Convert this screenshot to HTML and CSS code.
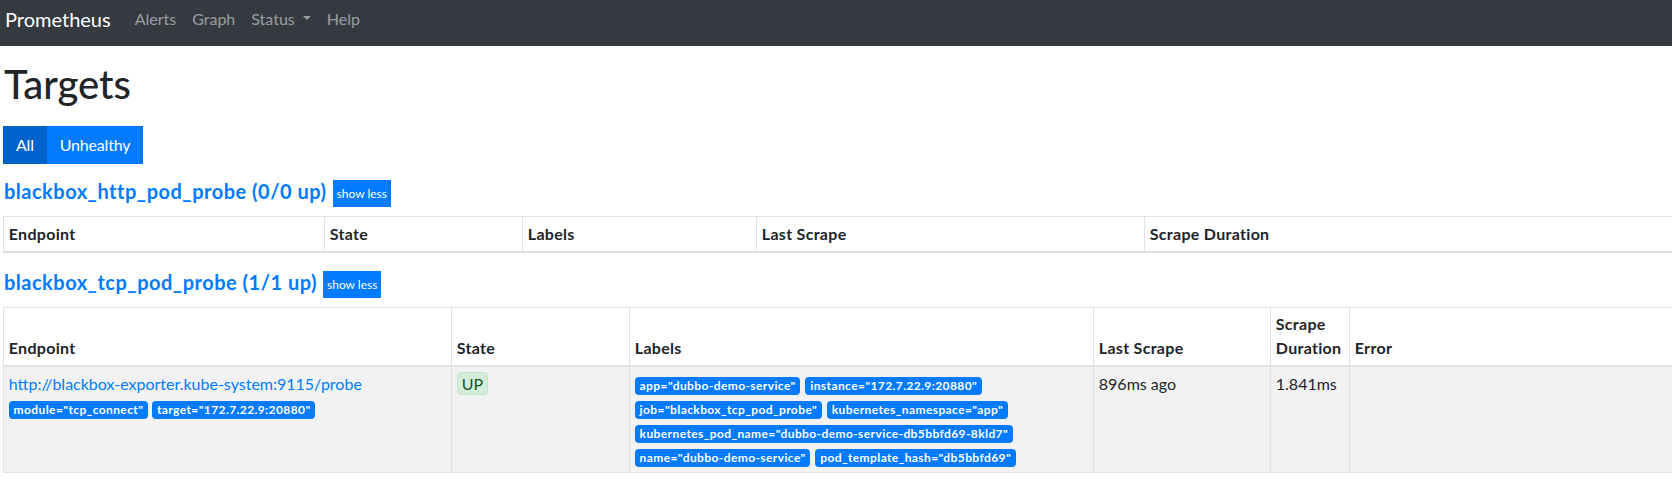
FILE: index.html
```html
<!DOCTYPE html>
<html lang="en">
<head>
<meta charset="utf-8">
<title>Prometheus Time Series Collection and Processing Server</title>
<link rel="stylesheet" href="styles.css">
</head>
<body>
<nav class="navbar">
  <a class="brand" href="#">Prometheus</a>
  <ul class="nav">
    <li><a class="nav-link" href="#">Alerts</a></li>
    <li><a class="nav-link" href="#">Graph</a></li>
    <li><a class="nav-link dropdown-toggle" href="#">Status</a></li>
    <li><a class="nav-link" href="#">Help</a></li>
  </ul>
</nav>
<main class="content">
  <h1 class="title">Targets</h1>
  <div class="btn-group">
    <button class="btn btn-primary active">All</button>
    <button class="btn btn-primary">Unhealthy</button>
  </div>

  <section class="job">
    <div class="job-head">
      <a class="job-name" href="#">blackbox_http_pod_probe (0/0 up)</a>
      <button class="btn-xs">show less</button>
    </div>
    <table class="targets targets-http">
      <colgroup>
        <col class="c-endpoint"><col class="c-state"><col class="c-labels"><col class="c-last"><col class="c-dur">
      </colgroup>
      <thead>
        <tr><th>Endpoint</th><th>State</th><th>Labels</th><th>Last Scrape</th><th>Scrape Duration</th></tr>
      </thead>
      <tbody></tbody>
    </table>
  </section>

  <section class="job">
    <div class="job-head">
      <a class="job-name" href="#">blackbox_tcp_pod_probe (1/1 up)</a>
      <button class="btn-xs">show less</button>
    </div>
    <table class="targets targets-tcp">
      <colgroup>
        <col class="c-endpoint"><col class="c-state"><col class="c-labels"><col class="c-last"><col class="c-dur"><col class="c-error">
      </colgroup>
      <thead>
        <tr><th>Endpoint</th><th>State</th><th>Labels</th><th>Last Scrape</th><th>Scrape Duration</th><th>Error</th></tr>
      </thead>
      <tbody>
        <tr>
          <td>
            <a class="endpoint-link" href="#">http://blackbox-exporter.kube-system:9115/probe</a>
            <div class="badges">
              <span class="badge">module="tcp_connect"</span>
              <span class="badge">target="172.7.22.9:20880"</span>
            </div>
          </td>
          <td><span class="state-indicator">UP</span></td>
          <td>
            <div class="badges labels">
              <span class="badge">app="dubbo-demo-service"</span>
              <span class="badge">instance="172.7.22.9:20880"</span>
              <span class="badge">job="blackbox_tcp_pod_probe"</span>
              <span class="badge">kubernetes_namespace="app"</span>
              <span class="badge">kubernetes_pod_name="dubbo-demo-service-db5bbfd69-8kld7"</span>
              <span class="badge">name="dubbo-demo-service"</span>
              <span class="badge">pod_template_hash="db5bbfd69"</span>
            </div>
          </td>
          <td>896ms ago</td>
          <td>1.841ms</td>
          <td></td>
        </tr>
      </tbody>
    </table>
  </section>
</main>
</body>
</html>
```
FILE: styles.css
```css
* { box-sizing: border-box; }

html, body {
  margin: 0;
  padding: 0;
  background: #fff;
}

body {
  font-family: Lato, "Liberation Sans", sans-serif;
  font-size: 16px;
  line-height: 1.5;
  color: #212529;
  overflow: hidden;
}

a { text-decoration: none; }

/* navbar */
.navbar {
  display: flex;
  align-items: center;
  height: 46px;
  padding: 0 0 9px 5px;
  background: #343a40;
}

.brand {
  font-size: 20px;
  line-height: 30px;
  color: #fff;
  margin-right: 16px;
}

.nav {
  display: flex;
  list-style: none;
  margin: 0;
  padding: 0;
}

.nav-link {
  display: block;
  padding: 0 8px;
  line-height: 24px;
  color: rgba(255, 255, 255, 0.5);
}

.dropdown-toggle::after {
  content: "";
  display: inline-block;
  margin-left: 0.5em;
  vertical-align: 0.255em;
  border-top: 0.3em solid;
  border-right: 0.3em solid transparent;
  border-left: 0.3em solid transparent;
  border-bottom: 0;
}

/* content */
.content {
  padding: 14px 0 0 3px;
  overflow: hidden;
}

.title {
  margin: 0 0 18px 1px;
  font-size: 40px;
  line-height: 48px;
  font-weight: 500;
  color: #212529;
}

.btn-group {
  display: flex;
  margin-bottom: 16px;
}

.btn {
  font-family: inherit;
  font-size: 16px;
  line-height: 24px;
  padding: 6px 12px;
  border: 1px solid #007bff;
  background: #007bff;
  color: #fff;
  border-radius: 0;
  letter-spacing: -0.2px;
  cursor: pointer;
}

.btn.active {
  background: #0062cc;
  border-color: #005cbf;
}

.job { margin-bottom: 18px; }

.job-head {
  display: flex;
  align-items: flex-start;
  gap: 6px;
  margin: 0 0 9px 1px;
}

.job-name {
  font-size: 20px;
  line-height: 24px;
  font-weight: 700;
  letter-spacing: 0.5px;
  color: #007bff;
  margin-top: -1px;
}

.btn-xs {
  font-family: inherit;
  font-size: 12px;
  line-height: 27px;
  height: 27px;
  padding: 0 4px;
  border: 0;
  background: #007bff;
  color: #fff;
  border-radius: 0;
}

/* tables */
.targets {
  width: 1900px;
  table-layout: fixed;
  border-collapse: collapse;
}

.targets th,
.targets td {
  border: 1px solid #dee2e6;
  padding: 4.8px;
  text-align: left;
  vertical-align: top;
}

.targets th {
  font-weight: 700;
  letter-spacing: 0.3px;
  vertical-align: bottom;
  border-bottom-width: 2px;
}

.targets tbody tr:nth-of-type(odd) { background: #f2f2f2; }

.targets-http .c-endpoint { width: 321px; }
.targets-http .c-state { width: 198px; }
.targets-http .c-labels { width: 234px; }
.targets-http .c-last { width: 388px; }

.targets-tcp .c-endpoint { width: 448px; }
.targets-tcp .c-state { width: 178px; }
.targets-tcp .c-labels { width: 464px; }
.targets-tcp .c-last { width: 177px; }
.targets-tcp .c-dur { width: 79px; }

.endpoint-link {
  color: #007bff;
  display: block;
}

.badges {
  display: flex;
  flex-wrap: wrap;
  column-gap: 4px;
  row-gap: 6px;
  padding-top: 5px;
}

.badges.labels {
  column-gap: 5px;
}

.badge {
  display: inline-block;
  padding: 3px 4.8px;
  font-size: 12px;
  font-weight: 700;
  line-height: 12px;
  letter-spacing: 0.4px;
  color: #fff;
  background: #007bff;
  border-radius: 4px;
  white-space: nowrap;
}

.state-indicator {
  display: inline-block;
  line-height: 21px;
  padding: 0 4px;
  color: #155724;
  background: #d4edda;
  border: 1px solid #c3e6cb;
  border-radius: 4px;
}
```
